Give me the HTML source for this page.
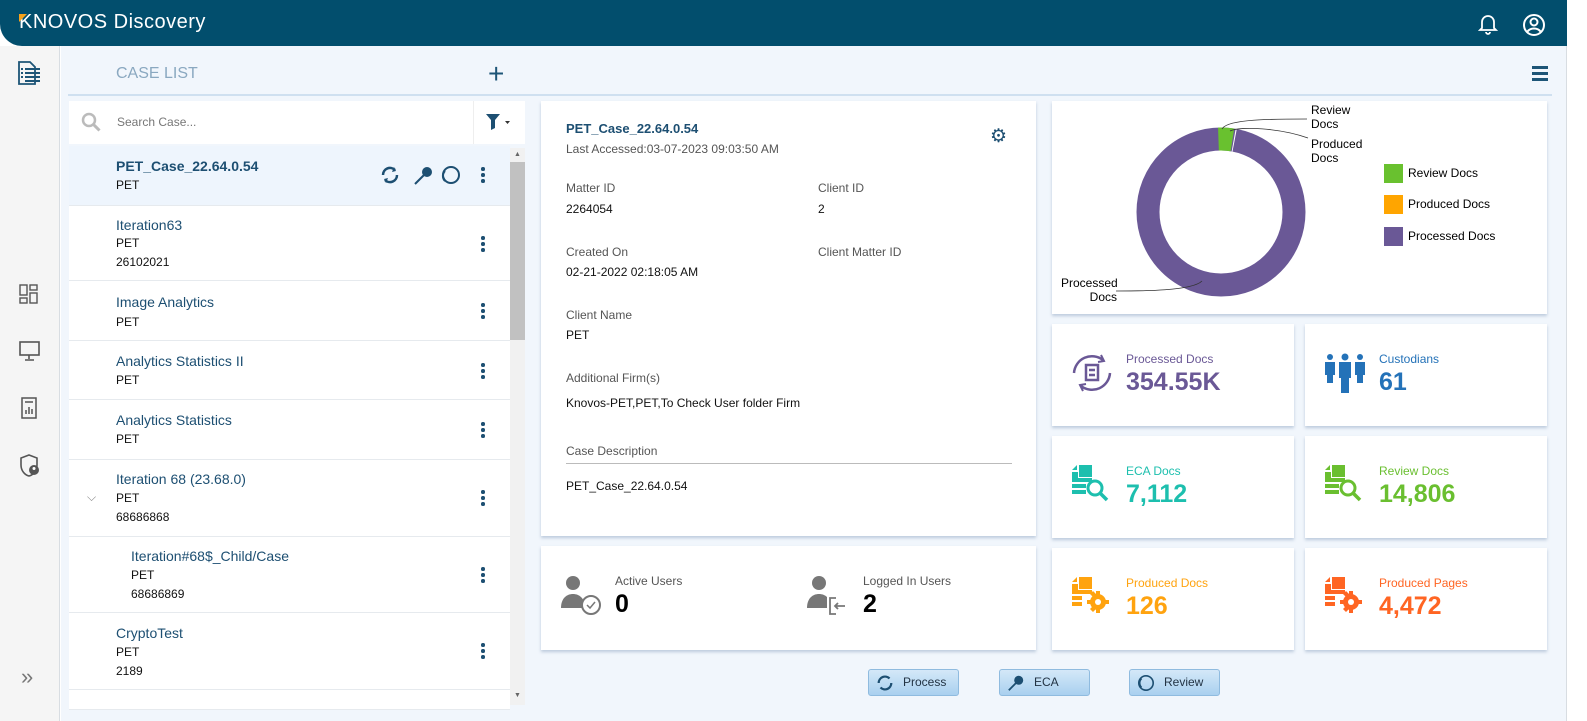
<!DOCTYPE html>
<html><head><meta charset="utf-8"><style>
*{box-sizing:border-box;margin:0;padding:0}
body{width:1587px;height:721px;overflow:hidden;font-family:"Liberation Sans",sans-serif;background:#fff;position:relative}
.abs{position:absolute}
.top{left:0;top:0;width:1567px;height:46px;background:#024e6d;border-radius:0 0 0 22px}
.side{left:0;top:46px;width:60px;height:675px;background:#f5f5f5;border-right:1px solid #d8dde2}
.main{left:61px;top:46px;width:1506px;height:675px;background:#f1f6fc}
.card{background:#fff;box-shadow:0 2px 3px rgba(90,120,160,.35)}
.lbl{font-size:12px;color:#555}
.val{font-size:12px;color:#111}
.item{position:absolute;left:69px;width:441px;background:#fff;border-bottom:1px solid #e6eaee}
.item .n{position:absolute;left:47px;font-size:14px;color:#1d4f72}
.item .s{position:absolute;left:47px;font-size:12px;color:#111}
.dots{position:absolute;left:412px;width:4px}
.dots i{display:block;width:3.5px;height:3.5px;border-radius:50%;background:#1d4f72;margin-bottom:2.5px}
.st .t{position:absolute;left:74px;top:28px;font-size:12px}
.st .v{position:absolute;left:74px;top:44px;font-size:25px;font-weight:bold}
.btn{top:669px;height:27px;border:1px solid #8fbbdf;border-radius:3px;background:linear-gradient(#d4e8f8,#a9d0ef);font-size:12px;color:#234;padding-left:34px;line-height:25px}
</style></head><body>
<div class="abs top"></div>
<div class="abs" style="left:19px;top:11px;font-size:20px;color:#fff;letter-spacing:.5px">KNOVOS Discovery</div>
<div class="abs" style="left:19px;top:14px;width:0;height:0;border-top:8px solid #f7a21b;border-right:8px solid transparent"></div>
<svg class="abs" style="left:1478px;top:13px" width="20" height="22" viewBox="0 0 20 22"><path d="M4 15V9a6 6 0 0112 0v6l2 2H2z M8 19a2 2 0 004 0" fill="none" stroke="#fff" stroke-width="1.8"/></svg>
<svg class="abs" style="left:1522px;top:13px" width="24" height="24" viewBox="0 0 24 24"><circle cx="12" cy="12" r="10" fill="none" stroke="#fff" stroke-width="2"/><circle cx="12" cy="9" r="3.5" fill="none" stroke="#fff" stroke-width="2"/><path d="M5.5 18.5c3-4 10-4 13 0" fill="none" stroke="#fff" stroke-width="2"/></svg>
<div class="abs side"></div>
<svg class="abs" style="left:17px;top:61px" width="26" height="24" viewBox="0 0 26 24"><path d="M2 1h11l5 5v17H2z" fill="none" stroke="#1d5577" stroke-width="1.8"/><path d="M8 8h15M8 12h15M8 16h15M8 20h15M4 8h2M4 12h2M4 16h2" stroke="#1d5577" stroke-width="2"/></svg>
<svg class="abs" style="left:19px;top:284px" width="20" height="20" viewBox="0 0 20 20" fill="none" stroke="#555" stroke-width="1.4"><rect x="1" y="1" width="7" height="10"/><rect x="11" y="1" width="7" height="5"/><rect x="1" y="14" width="7" height="5"/><rect x="11" y="9" width="7" height="10"/></svg>
<svg class="abs" style="left:19px;top:341px" width="21" height="20" viewBox="0 0 21 20" fill="none" stroke="#555" stroke-width="1.6"><rect x="1" y="1" width="19" height="13"/><path d="M10 14v4M6 19h9"/></svg>
<svg class="abs" style="left:20px;top:397px" width="18" height="22" viewBox="0 0 18 22" fill="none" stroke="#555" stroke-width="1.5"><path d="M2 1h14v20H2z"/><path d="M6 17v-4M9 17v-7M12 17v-5M5 5h8"/></svg>
<svg class="abs" style="left:19px;top:454px" width="22" height="24" viewBox="0 0 22 24"><path d="M10 1l8 3v7c0 6-4 10-8 11C6 21 2 17 2 11V4z" fill="none" stroke="#555" stroke-width="1.6"/><circle cx="15" cy="16" r="5" fill="#555"/><circle cx="15" cy="14.5" r="1.5" fill="#fff"/></svg>
<div class="abs" style="left:21px;top:664px;font-size:22px;color:#777">»</div>
<div class="abs main"></div>
<div class="abs" style="left:116px;top:65px;font-size:16px;color:#8aa8c0">CASE LIST</div>
<div class="abs" style="left:488px;top:58px;font-size:28px;color:#1d5577;font-weight:300">+</div>
<div class="abs" style="left:1532px;top:66px;width:16px"><div style="height:3px;background:#1d5577;margin-bottom:3px"></div><div style="height:3px;background:#1d5577;margin-bottom:3px"></div><div style="height:3px;background:#1d5577"></div></div>
<div class="abs" style="left:68px;top:94px;width:1484px;height:2px;background:#cfe0f0"></div>
<div class="abs" style="left:69px;top:101px;width:456px;height:43px;background:#fff"></div>
<svg class="abs" style="left:81px;top:112px" width="20" height="20" viewBox="0 0 20 20"><circle cx="8" cy="8" r="6" fill="none" stroke="#bbb" stroke-width="2.5"/><path d="M12.5 12.5l6 6" stroke="#bbb" stroke-width="3"/></svg>
<div class="abs" style="left:117px;top:115px;font-size:12px;color:#777">Search Case...</div>
<div class="abs" style="left:473px;top:101px;width:1px;height:43px;background:#eee"></div>
<svg class="abs" style="left:486px;top:114px" width="26" height="16" viewBox="0 0 26 16"><path d="M0 0h14l-5 6v8l-4 2V6z" fill="#1d4f72"/><path d="M19 7h5l-2.5 3z" fill="#333"/></svg>
<div class="abs" style="left:510px;top:148px;width:15px;height:557px;background:#f1f1f1"></div>
<div class="abs" style="left:510px;top:162px;width:15px;height:178px;background:#c1c1c1"></div>
<div class="abs" style="left:514px;top:151px;font-size:7px;color:#666">▲</div>
<div class="abs" style="left:514px;top:692px;font-size:7px;color:#666">▼</div>
<div class="item" style="top:146px;height:60px;background:#eef5fd"><div class="n" style="top:12px;font-weight:bold">PET_Case_22.64.0.54</div><div class="s" style="top:32px">PET</div><div class="dots" style="top:21px"><i></i><i></i><i></i></div>
<svg class="abs" style="left:311px;top:19px" width="80" height="20" viewBox="0 0 80 20"><path d="M3 10a7 7 0 0112-5M17 10a7 7 0 01-12 5" fill="none" stroke="#1d4f72" stroke-width="2.5"/><path d="M14 2l2 4-4 1zM6 18l-2-4 4-1z" fill="#1d4f72"/><circle cx="47" cy="7" r="5" fill="#1d4f72"/><path d="M44 10l-9 9" stroke="#1d4f72" stroke-width="2"/><circle cx="71" cy="10" r="8" fill="none" stroke="#1d4f72" stroke-width="2"/><path d="M65 6a7 7 0 000 10" stroke="#1d4f72" stroke-width="2" fill="none"/></svg></div>
<div class="item" style="top:206px;height:75px"><div class="n" style="top:11px">Iteration63</div><div class="s" style="top:30px">PET</div><div class="s" style="top:49px">26102021</div><div class="dots" style="top:30px"><i></i><i></i><i></i></div></div>
<div class="item" style="top:281px;height:60px"><div class="n" style="top:13px">Image Analytics</div><div class="s" style="top:34px">PET</div><div class="dots" style="top:22px"><i></i><i></i><i></i></div></div>
<div class="item" style="top:341px;height:59px"><div class="n" style="top:12px">Analytics Statistics II</div><div class="s" style="top:32px">PET</div><div class="dots" style="top:22px"><i></i><i></i><i></i></div></div>
<div class="item" style="top:400px;height:60px"><div class="n" style="top:12px">Analytics Statistics</div><div class="s" style="top:32px">PET</div><div class="dots" style="top:22px"><i></i><i></i><i></i></div></div>
<div class="item" style="top:460px;height:77px"><div style="position:absolute;left:18px;top:30px;font-size:12px;color:#888">⌵</div><div class="n" style="top:11px">Iteration 68 (23.68.0)</div><div class="s" style="top:31px">PET</div><div class="s" style="top:50px">68686868</div><div class="dots" style="top:30px"><i></i><i></i><i></i></div></div>
<div class="item" style="top:537px;height:76px"><div class="n" style="left:62px;top:11px">Iteration#68$_Child/Case</div><div class="s" style="left:62px;top:31px">PET</div><div class="s" style="left:62px;top:50px">68686869</div><div class="dots" style="top:30px"><i></i><i></i><i></i></div></div>
<div class="item" style="top:613px;height:77px"><div class="n" style="top:12px">CryptoTest</div><div class="s" style="top:32px">PET</div><div class="s" style="top:51px">2189</div><div class="dots" style="top:30px"><i></i><i></i><i></i></div></div>
<div class="item" style="top:690px;height:20px"></div>

<div class="abs card" style="left:541px;top:101px;width:495px;height:435px">
<div class="abs" style="left:25px;top:20px;font-size:13px;font-weight:bold;color:#1d4f72">PET_Case_22.64.0.54</div>
<div class="abs lbl" style="left:25px;top:41px">Last Accessed:03-07-2023 09:03:50 AM</div>
<div class="abs" style="left:449px;top:26px;font-size:19px;color:#1d4f72;line-height:1">⚙</div>
<div class="abs lbl" style="left:25px;top:80px">Matter ID</div><div class="abs val" style="left:25px;top:101px">2264054</div>
<div class="abs lbl" style="left:277px;top:80px">Client ID</div><div class="abs val" style="left:277px;top:101px">2</div>
<div class="abs lbl" style="left:25px;top:144px">Created On</div><div class="abs val" style="left:25px;top:164px">02-21-2022 02:18:05 AM</div>
<div class="abs lbl" style="left:277px;top:144px">Client Matter ID</div>
<div class="abs lbl" style="left:25px;top:207px">Client Name</div><div class="abs val" style="left:25px;top:227px">PET</div>
<div class="abs lbl" style="left:25px;top:270px">Additional Firm(s)</div><div class="abs val" style="left:25px;top:295px">Knovos-PET,PET,To Check User folder Firm</div>
<div class="abs lbl" style="left:25px;top:343px">Case Description</div>
<div class="abs" style="left:25px;top:362px;width:446px;height:1px;background:#bbb"></div>
<div class="abs val" style="left:25px;top:378px">PET_Case_22.64.0.54</div>
</div>
<div class="abs card" style="left:541px;top:546px;width:495px;height:104px">
<svg class="abs" style="left:20px;top:28px" width="42" height="42" viewBox="0 0 42 42"><circle cx="12" cy="9" r="7" fill="#777"/><path d="M0 34c0-10 6-14 12-14s12 4 12 14z" fill="#777"/><circle cx="30" cy="31" r="9" fill="#fff" stroke="#777" stroke-width="2"/><path d="M26 31l3 3 5-6" fill="none" stroke="#777" stroke-width="1.5"/></svg>
<div class="abs lbl" style="left:74px;top:28px">Active Users</div><div class="abs" style="left:74px;top:44px;font-size:25px;font-weight:bold">0</div>
<svg class="abs" style="left:266px;top:28px" width="42" height="42" viewBox="0 0 42 42"><circle cx="12" cy="9" r="7" fill="#777"/><path d="M0 34c0-10 6-14 12-14s12 4 12 14z" fill="#777"/><rect x="20" y="22" width="20" height="20" fill="#fff"/><path d="M29 24h-6v16h6M38 32h-10M31 29l-3 3 3 3" fill="none" stroke="#777" stroke-width="1.8"/></svg>
<div class="abs lbl" style="left:322px;top:28px">Logged In Users</div><div class="abs" style="left:322px;top:44px;font-size:25px;font-weight:bold">2</div>
</div>

<div class="abs card" style="left:1052px;top:101px;width:495px;height:213px">
<svg class="abs" style="left:0;top:0" width="495" height="213" viewBox="0 0 495 213">
<circle cx="169" cy="111" r="73" fill="none" stroke="#6a5896" stroke-width="23"/>
<circle cx="169" cy="111" r="73" fill="none" stroke="#69c12f" stroke-width="23" stroke-dasharray="14 500" transform="rotate(-92 169 111)"/>
<circle cx="169" cy="111" r="73" fill="none" stroke="#fff" stroke-width="23" stroke-dasharray="1 500" transform="rotate(-80 169 111)"/>
<path d="M170 28c5-10 50-10 85-10M178 30c10-5 50-3 78 7M150 180c-10 10-60 10-86 10" fill="none" stroke="#333" stroke-width="0.8"/>
</svg>
<div class="abs" style="left:259px;top:2px;font-size:12px;line-height:14px">Review<br>Docs</div>
<div class="abs" style="left:259px;top:36px;font-size:12px;line-height:14px">Produced<br>Docs</div>
<div class="abs" style="left:9px;top:175px;font-size:12px;line-height:14px;text-align:right;width:56px">Processed<br>Docs</div>
<div class="abs" style="left:332px;top:63px;width:19px;height:19px;background:#69c12f"></div><div class="abs" style="left:356px;top:65px;font-size:12px">Review Docs</div>
<div class="abs" style="left:332px;top:94px;width:19px;height:19px;background:#ffa500"></div><div class="abs" style="left:356px;top:96px;font-size:12px">Produced Docs</div>
<div class="abs" style="left:332px;top:126px;width:19px;height:19px;background:#6a5896"></div><div class="abs" style="left:356px;top:128px;font-size:12px">Processed Docs</div>
</div>

<div class="abs card st" style="left:1052px;top:324px;width:242px;height:102px"><svg class="abs" style="left:19px;top:28px" width="42" height="42" viewBox="0 0 42 42" fill="none" stroke="#6a5896" stroke-width="2.5"><path d="M32 8A18 18 0 003 21M10 34a18 18 0 0029-13"/><path d="M30 3l3 6-6 1M12 39l-3-6 6-1" stroke-width="2"/><path d="M15 13h12v15H15zM18 18h6M18 23h6"/></svg><div class="t" style="color:#6a5896">Processed Docs</div><div class="v" style="color:#6a5896">354.55K</div></div>
<div class="abs card st" style="left:1305px;top:324px;width:242px;height:102px"><svg class="abs" style="left:19px;top:29px" width="42" height="42" viewBox="0 0 42 42" fill="#2472b8"><circle cx="6" cy="4" r="3"/><circle cx="21" cy="4" r="3.5"/><circle cx="36" cy="4" r="3"/><path d="M1 9h10v13H9v8H3v-8H1zM15 9h12v16h-2v15h-8V25h-2zM31 9h10v13h-2v8h-6v-8h-2z"/></svg><div class="t" style="color:#2472b8">Custodians</div><div class="v" style="color:#2472b8">61</div></div>
<div class="abs card st" style="left:1052px;top:436px;width:242px;height:102px"><svg class="abs" style="left:19px;top:28px" width="42" height="42" viewBox="0 0 42 42" fill="#1dbfae"><path d="M1 6l5-5v5zM8 1h13v12H8z"/><path d="M1 8h6v6h14v4H1zM1 20h14v4H1zM1 26h14v4H1z"/><circle cx="24" cy="24" r="7" fill="none" stroke="#1dbfae" stroke-width="3"/><path d="M29 29l7 7" stroke="#1dbfae" stroke-width="3.5"/></svg><div class="t" style="color:#1dbfae">ECA Docs</div><div class="v" style="color:#1dbfae">7,112</div></div>
<div class="abs card st" style="left:1305px;top:436px;width:242px;height:102px"><svg class="abs" style="left:19px;top:28px" width="42" height="42" viewBox="0 0 42 42" fill="#6abf30"><path d="M1 6l5-5v5zM8 1h13v12H8z"/><path d="M1 8h6v6h14v4H1zM1 20h14v4H1zM1 26h14v4H1z"/><circle cx="24" cy="24" r="7" fill="none" stroke="#6abf30" stroke-width="3"/><path d="M29 29l7 7" stroke="#6abf30" stroke-width="3.5"/></svg><div class="t" style="color:#6abf30">Review Docs</div><div class="v" style="color:#6abf30">14,806</div></div>
<div class="abs card st" style="left:1052px;top:548px;width:242px;height:102px"><svg class="abs" style="left:19px;top:28px" width="42" height="42" viewBox="0 0 42 42" fill="#ffa30f"><path d="M1 6l5-5v5zM8 1h13v12H8z"/><path d="M1 8h6v6h14v4H1zM1 20h10v4H1zM1 26h10v4H1z"/><circle cx="27" cy="26" r="8"/><path d="M25 15h4v22h-4zM16 24h22v4H16zM19 18l3-3 12 12-3 3zM19 33l3 3 12-12-3-3z"/><circle cx="27" cy="26" r="3" fill="#fff"/></svg><div class="t" style="color:#ffa30f">Produced Docs</div><div class="v" style="color:#ffa30f">126</div></div>
<div class="abs card st" style="left:1305px;top:548px;width:242px;height:102px"><svg class="abs" style="left:19px;top:28px" width="42" height="42" viewBox="0 0 42 42" fill="#ff6523"><path d="M1 6l5-5v5zM8 1h13v12H8z"/><path d="M1 8h6v6h14v4H1zM1 20h10v4H1zM1 26h10v4H1z"/><circle cx="27" cy="26" r="8"/><path d="M25 15h4v22h-4zM16 24h22v4H16zM19 18l3-3 12 12-3 3zM19 33l3 3 12-12-3-3z"/><circle cx="27" cy="26" r="3" fill="#fff"/></svg><div class="t" style="color:#ff6523">Produced Pages</div><div class="v" style="color:#ff6523">4,472</div></div>

<div class="abs btn" style="left:868px;width:91px">Process<svg class="abs" style="left:7px;top:4px" width="18" height="18" viewBox="0 0 20 20"><path d="M3 10a7 7 0 0112-5M17 10a7 7 0 01-12 5" fill="none" stroke="#1d4f72" stroke-width="2.5"/></svg></div>
<div class="abs btn" style="left:999px;width:91px">ECA<svg class="abs" style="left:7px;top:4px" width="18" height="18" viewBox="0 0 20 20"><circle cx="13" cy="7" r="5" fill="#1d4f72"/><path d="M10 10l-8 8" stroke="#1d4f72" stroke-width="2"/></svg></div>
<div class="abs btn" style="left:1129px;width:91px">Review<svg class="abs" style="left:7px;top:4px" width="18" height="18" viewBox="0 0 20 20"><circle cx="10" cy="10" r="8" fill="none" stroke="#1d4f72" stroke-width="1.8"/><path d="M5 5a7 7 0 000 10" stroke="#1d4f72" stroke-width="2" fill="none"/></svg></div>
<div class="abs" style="left:1566px;top:46px;width:1px;height:675px;background:#d8dde2"></div>
</body></html>
